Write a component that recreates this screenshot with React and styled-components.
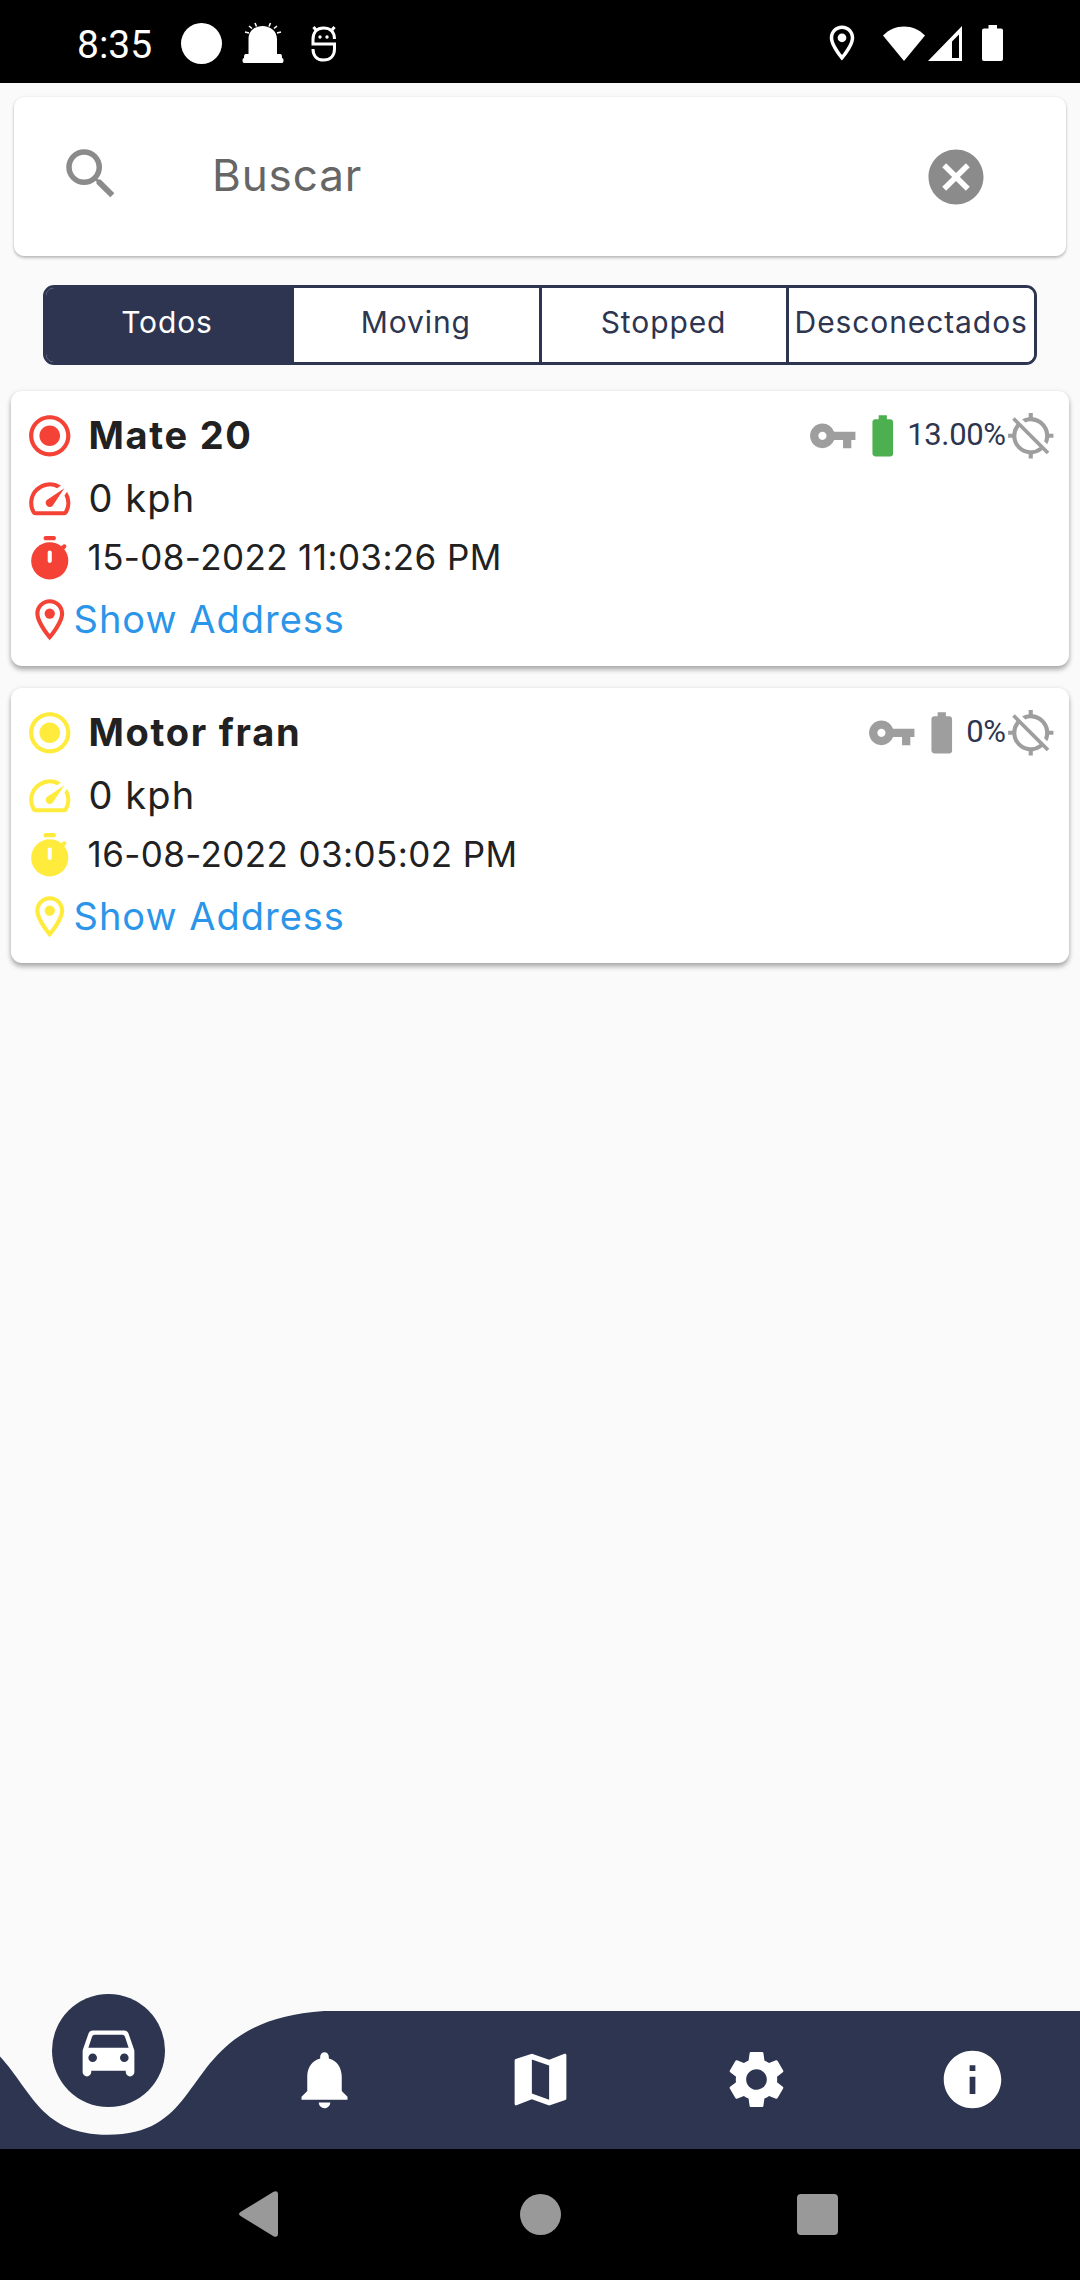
import React, { useState } from 'react';
import styled, { createGlobalStyle } from 'styled-components';
import {
  MdBatteryFull,
  MdCancel,
  MdGpsOff,
  MdInfo,
  MdMap,
  MdNotifications,
  MdRadioButtonChecked,
  MdSearch,
  MdSettings,
  MdSpeed,
  MdVpnKey,
} from 'react-icons/md';

const NAVY = '#2d3550';
const GREY = '#9e9e9e';

const GlobalStyle = createGlobalStyle`
  * {
    box-sizing: border-box;
  }

  body {
    margin: 0;
    background-color: #fafafa;
    font-family: Inter, 'Open Sans', sans-serif;
  }

  svg {
    display: block;
    flex: none;
  }
`;

const Screen = styled.div`
  width: 1080px;
  height: 2280px;
  display: flex;
  flex-direction: column;
  background-color: #fafafa;
  overflow: hidden;
`;

// Status bar
const StatusBar = styled.div`
  flex: none;
  height: 83px;
  padding: 3px 77px 0;
  display: flex;
  align-items: center;
  justify-content: space-between;
  background-color: #000;
  color: #fff;
`;

const StatusGroup = styled.div`
  display: flex;
  align-items: center;
  gap: ${(props) => props.$gap || 0}px;
`;

const Clock = styled.span`
  width: 104px;
  padding-top: 3px;
  font-family: Roboto, sans-serif;
  font-size: 39px;
  line-height: 46px;
`;

const Dot = styled.span`
  width: 41px;
  height: 41px;
  margin-right: 20px;
  border-radius: 50%;
  background-color: #fff;
`;

// Search
const SearchCard = styled.div`
  flex: none;
  height: 159px;
  margin: 14px 14px 0;
  padding: 0 77px 0 44px;
  display: flex;
  align-items: center;
  border-radius: 10px;
  background-color: #fff;
  box-shadow: 0 2px 3px rgba(0, 0, 0, 0.24), 0 0 3px rgba(0, 0, 0, 0.08);
  color: #8b8b8b;
`;

const SearchIcon = styled(MdSearch)`
  margin-bottom: 5px;
`;

const SearchText = styled.div`
  flex: 1;
  padding: 0 0 4px 88px;
  font-size: 44px;
  line-height: 60px;
  letter-spacing: 0.9px;
  color: #666;
`;

// Filter tabs
const Tabs = styled.div`
  flex: none;
  height: 80px;
  margin: 29px 43px 0;
  display: flex;
  border: 3px solid ${NAVY};
  border-radius: 11px;
  background-color: #fff;
  overflow: hidden;
`;

const Tab = styled.button`
  flex: ${(props) => (props.$first ? '0 0 245px' : '1 1 0')};
  min-width: 0;
  padding: 0 ${(props) => (props.$first ? '3px' : '1px')} 6px 0;
  border: 0;
  border-left: ${(props) => (props.$first ? '0' : `3px solid ${NAVY}`)};
  background-color: ${(props) => (props.$active ? NAVY : '#fff')};
  color: ${(props) => (props.$active ? '#fff' : NAVY)};
  font-family: inherit;
  font-size: 30px;
  letter-spacing: 0.9px;
  white-space: nowrap;
`;

// Device list
const DeviceList = styled.div`
  flex: 1;
  padding: 26px 11px 0;
  display: flex;
  flex-direction: column;
  gap: 22px;
`;

const DeviceCard = styled.div`
  height: 275px;
  padding: 13px 14px 0;
  border-radius: 11px;
  background-color: #fff;
  box-shadow: 0 4px 5px rgba(0, 0, 0, 0.25), 0 1px 5px rgba(0, 0, 0, 0.14);
`;

const Row = styled.div`
  height: ${(props) => props.$height || 63}px;
  display: flex;
  align-items: center;
  color: ${(props) => props.$color};
`;

const Name = styled.span`
  flex: 1;
  margin-left: 14px;
  padding-bottom: 1px;
  font-size: 38px;
  font-weight: 700;
  letter-spacing: 1.7px;
  color: #212121;
`;

const Speed = styled.span`
  margin-left: 14px;
  padding-bottom: 2px;
  font-size: 38px;
  letter-spacing: 1.1px;
  color: #212121;
`;

const Timestamp = styled.span`
  margin-left: 13px;
  padding-bottom: 5px;
  font-size: 35px;
  letter-spacing: 0.4px;
  color: #212121;
`;

const AddressLink = styled.a`
  margin-left: -1px;
  padding-bottom: 1px;
  font-size: 38px;
  letter-spacing: 1px;
  color: #2b95e9;
`;

const Meta = styled.div`
  display: flex;
  align-items: center;
  color: ${GREY};
`;

const Level = styled.span`
  padding-bottom: 3px;
  font-family: Roboto, sans-serif;
  font-size: 31px;
  letter-spacing: -0.4px;
  color: ${NAVY};
`;

// Bottom navigation
const BottomNav = styled.nav`
  flex: none;
  position: relative;
  height: 137.5px;
  display: flex;
  color: #fff;
`;

const NavCurve = styled.svg`
  position: absolute;
  top: 0;
  left: 0;
`;

const NavItem = styled.div`
  flex: 1;
  position: relative;
  display: flex;
  align-items: center;
  justify-content: center;
`;

const ActiveBubble = styled.div`
  width: 113px;
  height: 113px;
  display: flex;
  align-items: center;
  justify-content: center;
  border-radius: 50%;
  background-color: ${NAVY};
  transform: translateY(-29px);
`;

const SystemNav = styled.div`
  flex: none;
  height: 132px;
  padding: 0 242px 0 239px;
  display: flex;
  align-items: center;
  justify-content: space-between;
  background-color: #000;
`;

const HomeButton = styled.div`
  width: 41px;
  height: 41px;
  margin-left: 5px;
  border-radius: 50%;
  background-color: #999;
`;

const RecentsButton = styled.div`
  width: 41px;
  height: 41px;
  border-radius: 4px;
  background-color: #999;
`;

const SirenIcon = () => (
  <svg width="42" height="42" viewBox="0 0 42 42" fill="#fff">
    <path d="M6.500 32V17C6.500 9 13 4 20.500 4S35 9 35 17v15h3c2 0 2 2 2 4 1 0 1.500 1 1.500 2.500S41 41 40 41H2c-1 0-1.500-1-1.500-2.500S1 36 2 36c0-2 0-4 2-4z" />
    <path
      d="M3 10l4 1M7 4l3 2.500M13 1l1.500 3.500M28.500 1L27 4.500M35 4l-3 2.500M39 10l-4 1"
      stroke="#fff"
      strokeWidth="1.6"
    />
  </svg>
);

const BugIcon = styled(({ className }) => (
  <svg
    className={className}
    width="26"
    height="37"
    viewBox="0 0 26 37"
    fill="none"
    stroke="#fff"
    strokeWidth="3"
  >
    <path d="M23.500 14C23.500 7 19 3 12.500 3S2 7 2 14.500V19H23.500V24C23.500 31 19 35 12.500 35S2 31 2 24" />
    <path d="M5 5L2.500 2M21 5l2.500-3" />
    <circle cx="9" cy="12" r="1.700" fill="#fff" stroke="none" />
    <circle cx="16" cy="12" r="1.700" fill="#fff" stroke="none" />
  </svg>
))`
  margin-left: 27px;
`;

const PinIcon = ({ size = 49.5 }) => (
  <svg width={size} height={size} viewBox="0 0 24 24" fill="currentColor">
    <path d="M12 2C8.130 2 5 5.130 5 9c0 5.250 7 13 7 13s7-7.750 7-13c0-3.870-3.130-7-7-7zM7 9c0-2.760 2.240-5 5-5s5 2.240 5 5c0 2.880-2.880 7.190-5 9.880C9.920 16.210 7 11.850 7 9z" />
    <circle cx="12" cy="9" r="2.500" />
  </svg>
);

const WifiIcon = () => (
  <svg width="42" height="35" viewBox="0 0 42 35" fill="#fff">
    <path d="M0 9.500C6 3.500 13 .5 21 .5s15 3 21 9L21 35z" />
  </svg>
);

const SignalIcon = () => (
  <svg width="34" height="35" viewBox="0 0 34 35" fill="#fff">
    <path fillRule="evenodd" d="M34 0v35H0zM24 15.500V32h7V8.500z" />
  </svg>
);

const StatusBattery = () => (
  <svg width="21" height="36" viewBox="0 0 21 36" fill="#fff">
    <path d="M6.500 0h8.500v3.500h4q2 0 2 2V34q0 2-2 2H2q-2 0-2-2V5.500q0-2 2-2h4.500z" />
  </svg>
);

const TimerIcon = () => (
  <svg width="49.5" height="49.5" viewBox="0 0 24 24" fill="currentColor">
    <path d="M14 1h-4c-.55 0-1 .45-1 1s.45 1 1 1h4c.55 0 1-.45 1-1s-.45-1-1-1zm5.030 6.390l.75-.75c.38-.38.39-1.010 0-1.400l-.01-.01c-.39-.39-1.010-.38-1.400 0l-.75.75C16.070 4.740 14.120 4 12 4c-4.800 0-8.880 3.960-9 8.760C2.870 17.840 6.940 22 12 22c4.980 0 9-4.030 9-9 0-2.120-.74-4.070-1.970-5.610zM13 13c0 .55-.45 1-1 1s-1-.45-1-1V9c0-.55.45-1 1-1s1 .45 1 1v4z" />
  </svg>
);

const CarIcon = () => (
  <svg width="69" height="69" viewBox="0 0 24 24" fill="currentColor">
    <path d="M18.920 6.010C18.720 5.420 18.160 5 17.500 5h-11c-.66 0-1.210.42-1.420 1.010l-1.970 5.670c-.07.21-.11.43-.11.66v7.160c0 .83.67 1.500 1.500 1.500S6 20.330 6 19.500V19h12v.5c0 .82.67 1.500 1.500 1.500.82 0 1.500-.67 1.500-1.500v-7.160c0-.22-.04-.45-.11-.66l-1.970-5.670zM6.500 16c-.83 0-1.500-.67-1.500-1.500S5.670 13 6.500 13s1.500.67 1.500 1.500S7.330 16 6.500 16zm11 0c-.83 0-1.500-.67-1.500-1.500s.67-1.500 1.500-1.500 1.500.67 1.500 1.500-.67 1.500-1.500 1.500zM5 11l1.270-3.820c.14-.4.52-.68.95-.68h9.560c.43 0 .81.28.95.68L19 11H5z" />
  </svg>
);

const BackIcon = () => (
  <svg width="39" height="46" viewBox="0 0 39 46" fill="#999">
    <path d="M1.500 21L34.500.8Q39-1 39 3.500v39q0 4.500-4.500 2.700L1.500 25q-3-2 0-4z" />
  </svg>
);

const devices = [
  {
    name: 'Mate 20',
    color: '#f44336',
    time: '15-08-2022 11:03:26 PM',
    level: '13.00%',
    batteryColor: '#4caf50',
  },
  {
    name: 'Motor fran',
    color: '#ffeb3b',
    time: '16-08-2022 03:05:02 PM',
    level: '0%',
    batteryColor: GREY,
  },
];

const tabs = ['Todos', 'Moving', 'Stopped', 'Desconectados'];

const Device = ({ device }) => (
  <DeviceCard>
    <Row $color={device.color}>
      <MdRadioButtonChecked size={49.5} />
      <Name>{device.name}</Name>
      <Meta>
        <MdVpnKey size={49.5} />
        <MdBatteryFull size={49.5} color={device.batteryColor} />
        <Level>{device.level}</Level>
        <MdGpsOff size={49.5} />
      </Meta>
    </Row>
    <Row $color={device.color}>
      <MdSpeed size={49.5} />
      <Speed>0 kph</Speed>
    </Row>
    <Row $color={device.color} $height={58}>
      <TimerIcon />
      <Timestamp>{device.time}</Timestamp>
    </Row>
    <Row $color={device.color}>
      <PinIcon />
      <AddressLink>Show Address</AddressLink>
    </Row>
  </DeviceCard>
);

const App = () => {
  const [activeTab, setActiveTab] = useState('Todos');

  return (
    <Screen>
      <GlobalStyle />
      <StatusBar>
        <StatusGroup>
          <Clock>8:35</Clock>
          <Dot />
          <SirenIcon />
          <BugIcon />
        </StatusGroup>
        <StatusGroup $gap={20}>
          <PinIcon size={42} />
          <StatusGroup $gap={3}>
            <WifiIcon />
            <SignalIcon />
          </StatusGroup>
          <StatusBattery />
        </StatusGroup>
      </StatusBar>

      <SearchCard>
        <SearchIcon size={66} />
        <SearchText>Buscar</SearchText>
        <MdCancel size={66} />
      </SearchCard>

      <Tabs>
        {tabs.map((tab, index) => (
          <Tab
            key={tab}
            $first={index === 0}
            $active={tab === activeTab}
            onClick={() => setActiveTab(tab)}
          >
            {tab}
          </Tab>
        ))}
      </Tabs>

      <DeviceList>
        {devices.map((device) => (
          <Device key={device.name} device={device} />
        ))}
      </DeviceList>

      <BottomNav>
        <NavCurve width="1080" height="138" viewBox="0 0 1080 138" fill={NAVY}>
          <path d="M-108 0C43.200 10.300 0 123.750 108 123.750S172.800 10.300 324 0H1080V138H-108z" />
        </NavCurve>
        <NavItem>
          <ActiveBubble>
            <CarIcon />
          </ActiveBubble>
        </NavItem>
        <NavItem>
          <MdNotifications size={69} />
        </NavItem>
        <NavItem>
          <MdMap size={69} />
        </NavItem>
        <NavItem>
          <MdSettings size={69} />
        </NavItem>
        <NavItem>
          <MdInfo size={69} />
        </NavItem>
      </BottomNav>

      <SystemNav>
        <BackIcon />
        <HomeButton />
        <RecentsButton />
      </SystemNav>
    </Screen>
  );
};

export default App;
